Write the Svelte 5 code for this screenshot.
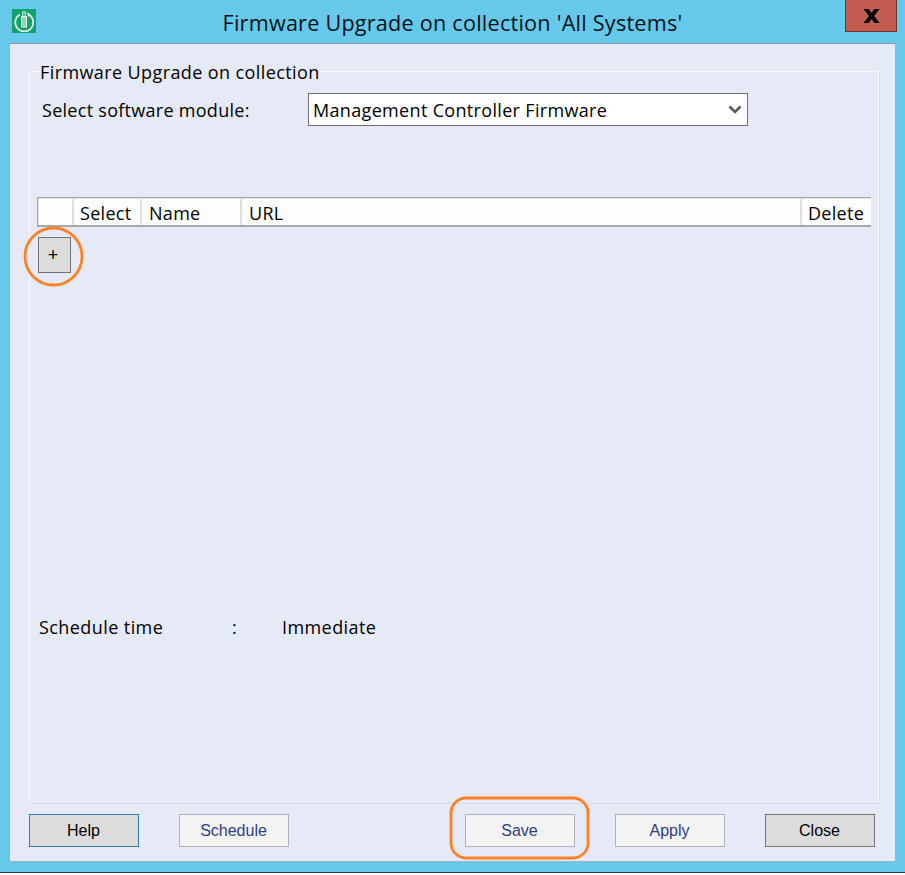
<script>
  const columns = [
    { label: '', width: 33 },
    { label: 'Select', width: 66 },
    { label: 'Name', width: 98 },
    { label: 'URL', width: 558 },
    { label: 'Delete', width: 69 }
  ];
</script>

<div class="window">
  <header class="titlebar">
    <svg class="logo" width="24" height="24" viewBox="0 0 24 24" aria-hidden="true">
      <rect width="24" height="24" fill="#12a06c" />
      <path d="M8 5.5A9 9 0 1 0 17 5.8" fill="none" stroke="#e8f8f0" stroke-width="1.7" />
      <path d="M14.5 3.5l3.8 1.2-1.6 3.4z" fill="#e8f8f0" />
      <rect x="9.5" y="7.5" width="5" height="10.5" fill="#8fd8b8" stroke="#e8f8f0" stroke-width="1" />
      <rect x="10.8" y="3" width="2.4" height="4.5" fill="none" stroke="#e8f8f0" stroke-width="1" />
    </svg>
    <h1>Firmware Upgrade on collection 'All Systems'</h1>
    <div class="close-x">
      <svg width="17" height="14" viewBox="0 0 17 14" aria-hidden="true">
        <path d="M0.5 0h5.2l2.8 4 2.8-4h5.2l-5.4 7 5.4 7h-5.2l-2.8-4-2.8 4H0.5l5.4-7z" fill="#000" />
      </svg>
    </div>
  </header>

  <main class="panel">
    <fieldset class="group">
      <legend>Firmware Upgrade on collection</legend>

      <div class="module-row">
        <span class="module-label">Select software module:</span>
        <div class="select">
          <span class="select-value">Management Controller Firmware</span>
          <svg width="14" height="9" viewBox="0 0 14 9" aria-hidden="true">
            <path d="M1.5 1.5L7 7l5.5-5.5" fill="none" stroke="#5a5a5a" stroke-width="2.6" />
          </svg>
        </div>
      </div>

      <div class="table-head">
        {#each columns as col}
          <div class="cell" style="width: {col.width}px">{col.label}</div>
        {/each}
      </div>

      <button class="add" type="button">+</button>

      <div class="schedule">
        <span class="s-label">Schedule time</span>
        <span class="s-colon">:</span>
        <span>Immediate</span>
      </div>
    </fieldset>

    <footer class="actions">
      <button class="btn grey focus" type="button">Help</button>
      <button class="btn off sched" type="button">Schedule</button>
      <button class="btn off save" type="button">Save</button>
      <button class="btn off apply" type="button">Apply</button>
      <button class="btn grey close" type="button">Close</button>
    </footer>
  </main>

  <svg class="annotations" width="905" height="875" viewBox="0 0 905 875" aria-hidden="true">
    <circle cx="53.5" cy="256.5" r="28.5" fill="none" stroke="#ff8126" stroke-width="2.8" />
    <rect x="451" y="798" width="137" height="60" rx="15" fill="none" stroke="#ff8126" stroke-width="2.8" />
  </svg>
</div>

<style>
  :global(body) {
    margin: 0;
    background: #fff;
  }
  .window {
    position: relative;
    width: 905px;
    height: 872px;
    background: #66c9ea;
    border-bottom: 1px solid #303a40;
    font-family: "Open Sans", "Noto Sans", sans-serif;
    color: #000;
    overflow: hidden;
  }
  .titlebar {
    position: relative;
    height: 43px;
    display: flex;
    align-items: flex-start;
    justify-content: center;
  }
  .logo {
    position: absolute;
    left: 12px;
    top: 9px;
  }
  h1 {
    margin: 0;
    padding-top: 9px;
    font-size: 21.6px;
    line-height: 28px;
    font-weight: 400;
    letter-spacing: 0.24px;
    color: #04121c;
  }
  .close-x {
    position: absolute;
    right: 8px;
    top: 0;
    width: 52px;
    height: 32px;
    box-sizing: border-box;
    background: #c25b50;
    border: 1px solid #6a3630;
    border-top: none;
    display: flex;
    align-items: center;
    justify-content: center;
  }
  .panel {
    margin: 0 10px;
    height: 819px;
    box-sizing: border-box;
    background: #e6eaf6;
    border-top: 1px solid #8f9aa5;
    border-bottom: 1px solid #9ab4c6;
    padding: 0 16px 0 19px;
    display: flex;
    flex-direction: column;
  }
  .group {
    margin: 14px 0 0;
    padding: 0 7px;
    height: 746px;
    box-sizing: border-box;
    border: 1px solid #f7f9fd;
    border-bottom-color: #d5d9e2;
    box-shadow: 1px 0 0 #d5d9e2;
    min-width: 0;
  }
  legend {
    margin-left: 3px;
    padding: 2px 0 0;
    font-size: 18px;
    line-height: 24px;
    letter-spacing: 0.4px;
  }
  .module-row {
    display: flex;
    align-items: center;
    margin-top: 9px;
    height: 33px;
  }
  .module-label {
    width: 271px;
    padding-left: 5px;
    box-sizing: border-box;
    font-size: 18px;
    letter-spacing: 0.28px;
  }
  .select {
    width: 440px;
    height: 33px;
    box-sizing: border-box;
    background: #fff;
    border: 1px solid #6e6e6e;
    display: flex;
    align-items: center;
    justify-content: space-between;
    padding: 0 5px 0 4px;
    font-size: 18px;
    letter-spacing: 0.33px;
  }
  .select-value { padding-top: 1px; }
  .select svg { margin-bottom: 1px; }
  .table-head {
    margin-top: 71px;
    height: 30px;
    width: 834px;
    box-sizing: border-box;
    display: flex;
    border-top: 1px solid #a8a8a8;
    border-bottom: 2px solid #a8a8a8;
    border-left: 1px solid #a8a8a8;
    background: #e0e0e0;
  }
  .cell {
    box-sizing: border-box;
    background: #fdfdfd;
    margin: 1px 2px 0 0;
    padding-left: 7px;
    font-size: 18px;
    line-height: 28px;
    white-space: nowrap;
    letter-spacing: 0.3px;
  }
  .cell:first-child {
    margin-left: 1px;
    padding: 0;
  }
  .cell:nth-child(2) { padding-left: 6px; }
  .cell:last-child {
    margin-right: 0;
    flex: 1;
    padding-left: 6px;
  }
  .add {
    display: block;
    margin: 10px 0 0 1px;
    width: 33px;
    height: 36px;
    padding: 0 3px 1px 0;
    background: #dcdcdc;
    border: 1px solid #737373;
    font-family: "Liberation Sans", sans-serif;
    font-size: 18px;
    line-height: 1;
    color: #000;
  }
  .schedule {
    margin-top: 342px;
    display: flex;
    font-size: 18px;
    line-height: 24px;
    letter-spacing: 0.42px;
    padding-left: 2px;
  }
  .s-label { width: 193px; }
  .s-colon { width: 50px; }
  .actions {
    margin-top: 10px;
    height: 33px;
    display: flex;
  }
  .btn {
    width: 110px;
    height: 33px;
    box-sizing: border-box;
    padding: 0 1px 0 0;
    font-family: "Liberation Sans", sans-serif;
    font-size: 16px;
  }
  .grey {
    background: #dcdcdc;
    border: 1px solid #757575;
    color: #000;
  }
  .focus { border-color: #2f7eb8; }
  .off {
    background: #f3f3f3;
    border: 1px solid #acb0b8;
    color: #2c3e85;
  }
  .sched { margin-left: 40px; }
  .save { margin-left: 176px; }
  .apply { margin-left: 40px; }
  .close { margin-left: 40px; }
  .annotations {
    position: absolute;
    left: 0;
    top: 0;
    pointer-events: none;
  }
</style>
